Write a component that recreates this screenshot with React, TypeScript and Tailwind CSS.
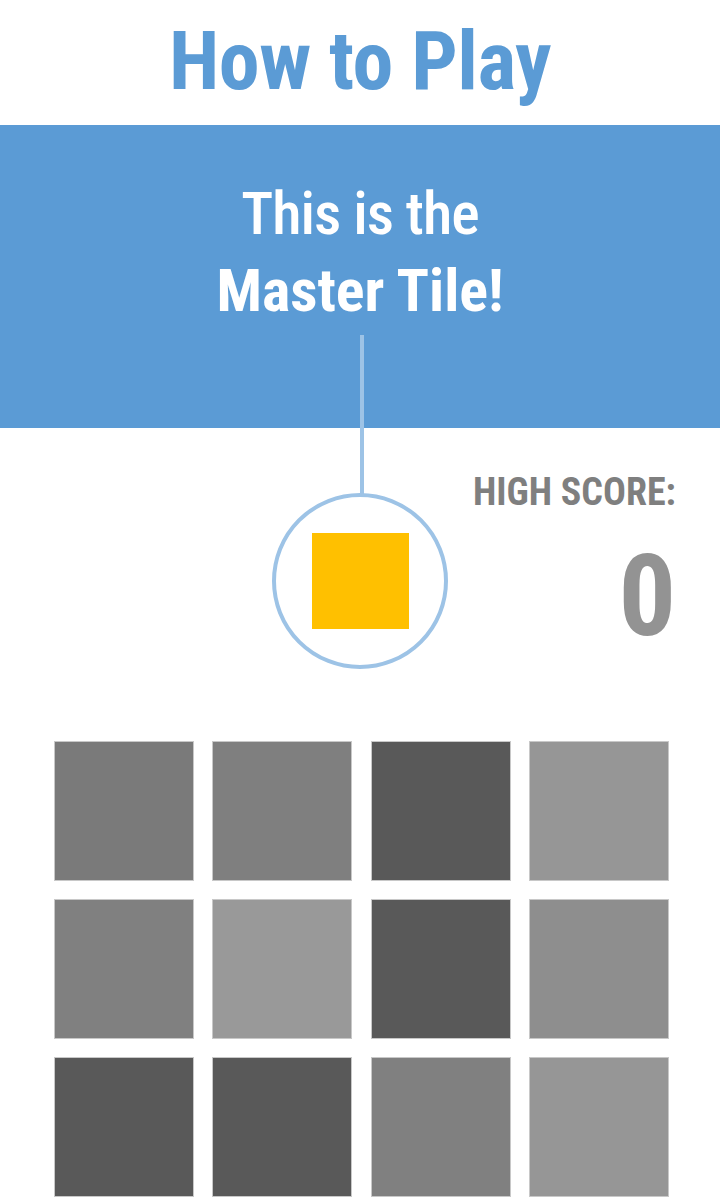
import React from "react";

const tiles = [
  "#7a7a7a", "#7f7f7f", "#595959", "#969696",
  "#808080", "#999999", "#595959", "#8e8e8e",
  "#595959", "#595959", "#808080", "#969696",
];

const font = { fontFamily: '"Roboto Condensed", "Liberation Sans Narrow", "DejaVu Sans Condensed", "Arial Narrow", sans-serif' };

export default function App() {
  return (
    <div className="w-[720px] h-[1200px] overflow-hidden bg-white" style={font}>
      <div className="h-[125px] flex items-center justify-center">
        <h1 className="text-[82px] font-bold text-[#5b9bd5] leading-none tracking-[-0.5px] mt-[-4px]">How to Play</h1>
      </div>
      <div className="h-[303px] bg-[#5b9bd5] flex flex-col items-center pt-[50px] text-white text-[60px] leading-[77px]">
        <div className="font-medium tracking-[-1px]">This is the</div>
        <div className="font-bold">Master Tile!</div>
      </div>
      <div className="relative h-[300px]">
        <div className="absolute left-[360px] top-[-93px] w-[4px] h-[160px] bg-[#9dc3e6]" />
        <div className="absolute left-[272px] top-[65px] w-[176px] h-[176px] rounded-full border-[4px] border-[#9dc3e6] flex items-center justify-center">
          <div className="w-[97px] h-[96px] bg-[#ffc000]" />
        </div>
        <div className="absolute right-[44px] top-[45px] flex flex-col items-end text-[#7f7f7f]">
          <div className="text-[38px] font-bold leading-none">HIGH SCORE:</div>
          <div className="text-[114px] font-bold leading-none mt-[28px] text-[#939393]">0</div>
        </div>
      </div>
      <div className="grid grid-cols-[repeat(4,140px)] gap-x-[18.33px] gap-y-[18px] pl-[54px] pt-[13px]">
        {tiles.map((c, i) => (
          <div key={i} className="w-[140px] h-[140px] border border-[#c8c8c8]" style={{ backgroundColor: c }} />
        ))}
      </div>
    </div>
  );
}
